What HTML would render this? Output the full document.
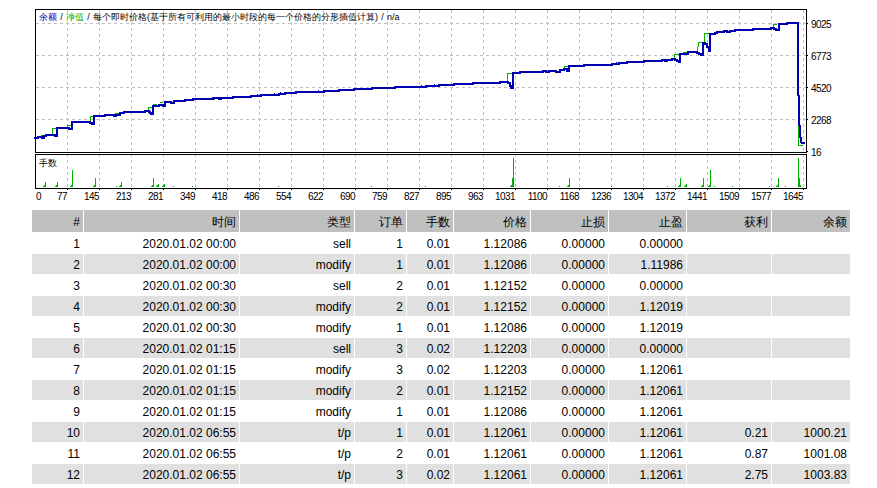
<!DOCTYPE html>
<html><head><meta charset="utf-8"><style>
html,body{margin:0;padding:0;background:#fff;width:877px;height:488px;overflow:hidden;position:relative}
body{font-family:"Liberation Sans",sans-serif}
.t{position:absolute;white-space:nowrap;color:#000}
.ttl{position:absolute;left:39px;top:11px;font-size:9px;line-height:12px;white-space:nowrap}
.yl{position:absolute;left:811px;font-size:10px;letter-spacing:-0.55px;line-height:10px;white-space:nowrap}
.xl{position:absolute;top:192px;font-size:10px;letter-spacing:-0.55px;line-height:10px;white-space:nowrap;text-align:right}
.sl{display:inline-block;width:9px;text-align:center}
.c{position:absolute;height:20px;line-height:22px;font-size:12px;text-align:right;box-sizing:border-box;padding-right:3px;white-space:nowrap;color:#000}
.h{background:#c0c0c0;line-height:24px}
.r2{background:#e0e0e0}
</style></head><body>
<svg width="877" height="205" style="position:absolute;left:0;top:0" shape-rendering="crispEdges">
<defs><pattern id="hd" patternUnits="userSpaceOnUse" x="0" y="0" width="6" height="1"><rect x="0" y="0" width="3" height="1" fill="#c0c0c0"/></pattern><pattern id="vd" patternUnits="userSpaceOnUse" x="0" y="4" width="1" height="6"><rect x="0" y="0" width="1" height="3" fill="#c0c0c0"/></pattern></defs>
<rect x="36" y="23" width="770" height="1" fill="url(#hd)"/>
<rect x="36" y="55" width="770" height="1" fill="url(#hd)"/>
<rect x="36" y="87" width="770" height="1" fill="url(#hd)"/>
<rect x="36" y="119" width="770" height="1" fill="url(#hd)"/>
<rect x="67" y="10" width="1" height="142" fill="url(#vd)"/>
<rect x="67" y="155" width="1" height="33" fill="url(#vd)"/>
<rect x="67" y="189" width="1" height="1" fill="#000"/>
<rect x="99" y="10" width="1" height="142" fill="url(#vd)"/>
<rect x="99" y="155" width="1" height="33" fill="url(#vd)"/>
<rect x="99" y="189" width="1" height="1" fill="#000"/>
<rect x="131" y="10" width="1" height="142" fill="url(#vd)"/>
<rect x="131" y="155" width="1" height="33" fill="url(#vd)"/>
<rect x="131" y="189" width="1" height="1" fill="#000"/>
<rect x="163" y="10" width="1" height="142" fill="url(#vd)"/>
<rect x="163" y="155" width="1" height="33" fill="url(#vd)"/>
<rect x="163" y="189" width="1" height="1" fill="#000"/>
<rect x="195" y="10" width="1" height="142" fill="url(#vd)"/>
<rect x="195" y="155" width="1" height="33" fill="url(#vd)"/>
<rect x="195" y="189" width="1" height="1" fill="#000"/>
<rect x="227" y="10" width="1" height="142" fill="url(#vd)"/>
<rect x="227" y="155" width="1" height="33" fill="url(#vd)"/>
<rect x="227" y="189" width="1" height="1" fill="#000"/>
<rect x="259" y="10" width="1" height="142" fill="url(#vd)"/>
<rect x="259" y="155" width="1" height="33" fill="url(#vd)"/>
<rect x="259" y="189" width="1" height="1" fill="#000"/>
<rect x="291" y="10" width="1" height="142" fill="url(#vd)"/>
<rect x="291" y="155" width="1" height="33" fill="url(#vd)"/>
<rect x="291" y="189" width="1" height="1" fill="#000"/>
<rect x="323" y="10" width="1" height="142" fill="url(#vd)"/>
<rect x="323" y="155" width="1" height="33" fill="url(#vd)"/>
<rect x="323" y="189" width="1" height="1" fill="#000"/>
<rect x="355" y="10" width="1" height="142" fill="url(#vd)"/>
<rect x="355" y="155" width="1" height="33" fill="url(#vd)"/>
<rect x="355" y="189" width="1" height="1" fill="#000"/>
<rect x="387" y="10" width="1" height="142" fill="url(#vd)"/>
<rect x="387" y="155" width="1" height="33" fill="url(#vd)"/>
<rect x="387" y="189" width="1" height="1" fill="#000"/>
<rect x="419" y="10" width="1" height="142" fill="url(#vd)"/>
<rect x="419" y="155" width="1" height="33" fill="url(#vd)"/>
<rect x="419" y="189" width="1" height="1" fill="#000"/>
<rect x="451" y="10" width="1" height="142" fill="url(#vd)"/>
<rect x="451" y="155" width="1" height="33" fill="url(#vd)"/>
<rect x="451" y="189" width="1" height="1" fill="#000"/>
<rect x="483" y="10" width="1" height="142" fill="url(#vd)"/>
<rect x="483" y="155" width="1" height="33" fill="url(#vd)"/>
<rect x="483" y="189" width="1" height="1" fill="#000"/>
<rect x="515" y="10" width="1" height="142" fill="url(#vd)"/>
<rect x="515" y="155" width="1" height="33" fill="url(#vd)"/>
<rect x="515" y="189" width="1" height="1" fill="#000"/>
<rect x="547" y="10" width="1" height="142" fill="url(#vd)"/>
<rect x="547" y="155" width="1" height="33" fill="url(#vd)"/>
<rect x="547" y="189" width="1" height="1" fill="#000"/>
<rect x="579" y="10" width="1" height="142" fill="url(#vd)"/>
<rect x="579" y="155" width="1" height="33" fill="url(#vd)"/>
<rect x="579" y="189" width="1" height="1" fill="#000"/>
<rect x="611" y="10" width="1" height="142" fill="url(#vd)"/>
<rect x="611" y="155" width="1" height="33" fill="url(#vd)"/>
<rect x="611" y="189" width="1" height="1" fill="#000"/>
<rect x="643" y="10" width="1" height="142" fill="url(#vd)"/>
<rect x="643" y="155" width="1" height="33" fill="url(#vd)"/>
<rect x="643" y="189" width="1" height="1" fill="#000"/>
<rect x="675" y="10" width="1" height="142" fill="url(#vd)"/>
<rect x="675" y="155" width="1" height="33" fill="url(#vd)"/>
<rect x="675" y="189" width="1" height="1" fill="#000"/>
<rect x="707" y="10" width="1" height="142" fill="url(#vd)"/>
<rect x="707" y="155" width="1" height="33" fill="url(#vd)"/>
<rect x="707" y="189" width="1" height="1" fill="#000"/>
<rect x="739" y="10" width="1" height="142" fill="url(#vd)"/>
<rect x="739" y="155" width="1" height="33" fill="url(#vd)"/>
<rect x="739" y="189" width="1" height="1" fill="#000"/>
<rect x="771" y="10" width="1" height="142" fill="url(#vd)"/>
<rect x="771" y="155" width="1" height="33" fill="url(#vd)"/>
<rect x="771" y="189" width="1" height="1" fill="#000"/>
<rect x="803" y="10" width="1" height="142" fill="url(#vd)"/>
<rect x="803" y="155" width="1" height="33" fill="url(#vd)"/>
<rect x="803" y="189" width="1" height="1" fill="#000"/>
<rect x="35.5" y="9.5" width="771" height="143" fill="none" stroke="#000" stroke-width="1"/>
<rect x="35.5" y="154.5" width="771" height="34" fill="none" stroke="#000" stroke-width="1"/>
<rect x="807" y="23" width="1" height="1" fill="#000"/>
<rect x="807" y="55" width="1" height="1" fill="#000"/>
<rect x="807" y="87" width="1" height="1" fill="#000"/>
<rect x="807" y="119" width="1" height="1" fill="#000"/>
<rect x="807" y="151" width="1" height="1" fill="#000"/>
<rect x="41" y="135" width="3" height="1" fill="#00b000"/>
<rect x="52" y="128" width="1" height="8" fill="#00b000"/>
<rect x="52" y="128" width="4" height="1" fill="#00b000"/>
<rect x="67" y="125" width="1" height="3" fill="#00b000"/>
<rect x="67" y="125" width="4" height="1" fill="#00b000"/>
<rect x="71" y="122" width="1" height="4" fill="#00b000"/>
<rect x="90" y="116" width="1" height="7" fill="#00b000"/>
<rect x="90" y="116" width="4" height="1" fill="#00b000"/>
<rect x="115" y="113" width="4" height="1" fill="#00b000"/>
<rect x="148" y="107" width="1" height="5" fill="#00b000"/>
<rect x="148" y="107" width="4" height="1" fill="#00b000"/>
<rect x="153" y="104" width="4" height="1" fill="#00b000"/>
<rect x="160" y="102" width="3" height="1" fill="#00b000"/>
<rect x="214" y="99" width="1" height="1" fill="#00b000"/>
<rect x="507" y="73" width="1" height="10" fill="#00b000"/>
<rect x="507" y="73" width="6" height="1" fill="#00b000"/>
<rect x="564" y="66" width="1" height="4" fill="#00b000"/>
<rect x="564" y="66" width="5" height="1" fill="#00b000"/>
<rect x="675" y="54" width="5" height="1" fill="#00b000"/>
<rect x="674" y="54" width="1" height="4" fill="#00b000"/>
<rect x="683" y="52" width="4" height="1" fill="#00b000"/>
<rect x="697" y="47" width="1" height="6" fill="#00b000"/>
<rect x="698" y="42" width="1" height="5" fill="#00b000"/>
<rect x="698" y="42" width="5" height="1" fill="#00b000"/>
<rect x="704" y="33" width="1" height="10" fill="#00b000"/>
<rect x="704" y="33" width="6" height="1" fill="#00b000"/>
<rect x="773" y="24" width="4" height="1" fill="#00b000"/>
<rect x="773" y="24" width="1" height="4" fill="#00b000"/>
<rect x="798" y="125" width="1" height="21" fill="#00b000"/>
<rect x="798" y="145" width="5" height="1" fill="#00b000"/>
<rect x="34" y="137" width="5" height="2" fill="#0000b0"/>
<rect x="37" y="136" width="2" height="3" fill="#0000b0"/>
<rect x="37" y="136" width="6" height="2" fill="#0000b0"/>
<rect x="41" y="136" width="2" height="3" fill="#0000b0"/>
<rect x="41" y="137" width="4" height="2" fill="#0000b0"/>
<rect x="43" y="135" width="2" height="4" fill="#0000b0"/>
<rect x="43" y="135" width="4" height="2" fill="#0000b0"/>
<rect x="45" y="134" width="2" height="3" fill="#0000b0"/>
<rect x="45" y="134" width="11" height="2" fill="#0000b0"/>
<rect x="54" y="134" width="2" height="3" fill="#0000b0"/>
<rect x="54" y="135" width="4" height="2" fill="#0000b0"/>
<rect x="56" y="127" width="2" height="10" fill="#0000b0"/>
<rect x="56" y="127" width="14" height="2" fill="#0000b0"/>
<rect x="68" y="127" width="2" height="3" fill="#0000b0"/>
<rect x="68" y="128" width="5" height="2" fill="#0000b0"/>
<rect x="71" y="121" width="2" height="9" fill="#0000b0"/>
<rect x="71" y="121" width="20" height="2" fill="#0000b0"/>
<rect x="89" y="121" width="2" height="3" fill="#0000b0"/>
<rect x="89" y="122" width="4" height="2" fill="#0000b0"/>
<rect x="91" y="122" width="2" height="3" fill="#0000b0"/>
<rect x="91" y="123" width="4" height="2" fill="#0000b0"/>
<rect x="93" y="115" width="2" height="10" fill="#0000b0"/>
<rect x="93" y="115" width="13" height="2" fill="#0000b0"/>
<rect x="104" y="114" width="2" height="3" fill="#0000b0"/>
<rect x="104" y="114" width="11" height="2" fill="#0000b0"/>
<rect x="113" y="114" width="2" height="3" fill="#0000b0"/>
<rect x="113" y="115" width="4" height="2" fill="#0000b0"/>
<rect x="115" y="114" width="2" height="3" fill="#0000b0"/>
<rect x="115" y="114" width="6" height="2" fill="#0000b0"/>
<rect x="119" y="112" width="2" height="4" fill="#0000b0"/>
<rect x="119" y="112" width="6" height="2" fill="#0000b0"/>
<rect x="123" y="111" width="2" height="3" fill="#0000b0"/>
<rect x="123" y="111" width="23" height="2" fill="#0000b0"/>
<rect x="144" y="110" width="2" height="3" fill="#0000b0"/>
<rect x="144" y="110" width="6" height="2" fill="#0000b0"/>
<rect x="148" y="110" width="2" height="3" fill="#0000b0"/>
<rect x="148" y="111" width="3" height="2" fill="#0000b0"/>
<rect x="149" y="111" width="2" height="3" fill="#0000b0"/>
<rect x="149" y="112" width="3" height="2" fill="#0000b0"/>
<rect x="150" y="112" width="2" height="3" fill="#0000b0"/>
<rect x="150" y="113" width="4" height="2" fill="#0000b0"/>
<rect x="152" y="105" width="2" height="10" fill="#0000b0"/>
<rect x="152" y="105" width="8" height="2" fill="#0000b0"/>
<rect x="158" y="104" width="2" height="3" fill="#0000b0"/>
<rect x="158" y="104" width="6" height="2" fill="#0000b0"/>
<rect x="162" y="104" width="2" height="3" fill="#0000b0"/>
<rect x="162" y="105" width="4" height="2" fill="#0000b0"/>
<rect x="164" y="101" width="2" height="6" fill="#0000b0"/>
<rect x="164" y="101" width="8" height="2" fill="#0000b0"/>
<rect x="170" y="101" width="2" height="3" fill="#0000b0"/>
<rect x="170" y="102" width="5" height="2" fill="#0000b0"/>
<rect x="173" y="100" width="2" height="4" fill="#0000b0"/>
<rect x="173" y="100" width="13" height="2" fill="#0000b0"/>
<rect x="184" y="99" width="2" height="3" fill="#0000b0"/>
<rect x="184" y="99" width="10" height="2" fill="#0000b0"/>
<rect x="192" y="98" width="2" height="3" fill="#0000b0"/>
<rect x="192" y="98" width="22" height="2" fill="#0000b0"/>
<rect x="212" y="97" width="2" height="3" fill="#0000b0"/>
<rect x="212" y="97" width="8" height="2" fill="#0000b0"/>
<rect x="218" y="97" width="2" height="3" fill="#0000b0"/>
<rect x="218" y="98" width="4" height="2" fill="#0000b0"/>
<rect x="220" y="97" width="2" height="3" fill="#0000b0"/>
<rect x="220" y="97" width="14" height="2" fill="#0000b0"/>
<rect x="232" y="96" width="2" height="3" fill="#0000b0"/>
<rect x="232" y="96" width="20" height="2" fill="#0000b0"/>
<rect x="250" y="95" width="2" height="3" fill="#0000b0"/>
<rect x="250" y="95" width="12" height="2" fill="#0000b0"/>
<rect x="260" y="94" width="2" height="3" fill="#0000b0"/>
<rect x="260" y="94" width="20" height="2" fill="#0000b0"/>
<rect x="278" y="93" width="2" height="3" fill="#0000b0"/>
<rect x="278" y="93" width="8" height="2" fill="#0000b0"/>
<rect x="284" y="92" width="2" height="3" fill="#0000b0"/>
<rect x="284" y="92" width="13" height="2" fill="#0000b0"/>
<rect x="295" y="91" width="2" height="3" fill="#0000b0"/>
<rect x="295" y="91" width="30" height="2" fill="#0000b0"/>
<rect x="323" y="90" width="2" height="3" fill="#0000b0"/>
<rect x="323" y="90" width="17" height="2" fill="#0000b0"/>
<rect x="338" y="89" width="2" height="3" fill="#0000b0"/>
<rect x="338" y="89" width="17" height="2" fill="#0000b0"/>
<rect x="353" y="88" width="2" height="3" fill="#0000b0"/>
<rect x="353" y="88" width="20" height="2" fill="#0000b0"/>
<rect x="371" y="87" width="2" height="3" fill="#0000b0"/>
<rect x="371" y="87" width="25" height="2" fill="#0000b0"/>
<rect x="394" y="86" width="2" height="3" fill="#0000b0"/>
<rect x="394" y="86" width="33" height="2" fill="#0000b0"/>
<rect x="425" y="85" width="2" height="3" fill="#0000b0"/>
<rect x="425" y="85" width="15" height="2" fill="#0000b0"/>
<rect x="438" y="84" width="2" height="3" fill="#0000b0"/>
<rect x="438" y="84" width="17" height="2" fill="#0000b0"/>
<rect x="453" y="83" width="2" height="3" fill="#0000b0"/>
<rect x="453" y="83" width="21" height="2" fill="#0000b0"/>
<rect x="472" y="82" width="2" height="3" fill="#0000b0"/>
<rect x="472" y="82" width="29" height="2" fill="#0000b0"/>
<rect x="499" y="81" width="2" height="3" fill="#0000b0"/>
<rect x="499" y="81" width="10" height="2" fill="#0000b0"/>
<rect x="507" y="81" width="2" height="3" fill="#0000b0"/>
<rect x="507" y="82" width="4" height="2" fill="#0000b0"/>
<rect x="509" y="82" width="2" height="5" fill="#0000b0"/>
<rect x="509" y="85" width="3" height="2" fill="#0000b0"/>
<rect x="510" y="85" width="2" height="4" fill="#0000b0"/>
<rect x="510" y="87" width="4" height="2" fill="#0000b0"/>
<rect x="512" y="72" width="2" height="17" fill="#0000b0"/>
<rect x="512" y="72" width="9" height="2" fill="#0000b0"/>
<rect x="519" y="71" width="2" height="3" fill="#0000b0"/>
<rect x="519" y="71" width="25" height="2" fill="#0000b0"/>
<rect x="542" y="70" width="2" height="3" fill="#0000b0"/>
<rect x="542" y="70" width="5" height="2" fill="#0000b0"/>
<rect x="545" y="70" width="2" height="3" fill="#0000b0"/>
<rect x="545" y="71" width="5" height="2" fill="#0000b0"/>
<rect x="548" y="70" width="2" height="3" fill="#0000b0"/>
<rect x="548" y="70" width="9" height="2" fill="#0000b0"/>
<rect x="555" y="70" width="2" height="3" fill="#0000b0"/>
<rect x="555" y="71" width="6" height="2" fill="#0000b0"/>
<rect x="559" y="69" width="2" height="4" fill="#0000b0"/>
<rect x="559" y="69" width="6" height="2" fill="#0000b0"/>
<rect x="563" y="68" width="2" height="3" fill="#0000b0"/>
<rect x="563" y="68" width="5" height="2" fill="#0000b0"/>
<rect x="566" y="68" width="2" height="4" fill="#0000b0"/>
<rect x="566" y="70" width="4" height="2" fill="#0000b0"/>
<rect x="568" y="65" width="2" height="7" fill="#0000b0"/>
<rect x="568" y="65" width="17" height="2" fill="#0000b0"/>
<rect x="583" y="64" width="2" height="3" fill="#0000b0"/>
<rect x="583" y="64" width="30" height="2" fill="#0000b0"/>
<rect x="611" y="63" width="2" height="3" fill="#0000b0"/>
<rect x="611" y="63" width="9" height="2" fill="#0000b0"/>
<rect x="618" y="62" width="2" height="3" fill="#0000b0"/>
<rect x="618" y="62" width="10" height="2" fill="#0000b0"/>
<rect x="626" y="61" width="2" height="3" fill="#0000b0"/>
<rect x="626" y="61" width="19" height="2" fill="#0000b0"/>
<rect x="643" y="60" width="2" height="3" fill="#0000b0"/>
<rect x="643" y="60" width="20" height="2" fill="#0000b0"/>
<rect x="661" y="59" width="2" height="3" fill="#0000b0"/>
<rect x="661" y="59" width="5" height="2" fill="#0000b0"/>
<rect x="664" y="59" width="2" height="3" fill="#0000b0"/>
<rect x="664" y="60" width="4" height="2" fill="#0000b0"/>
<rect x="666" y="59" width="2" height="3" fill="#0000b0"/>
<rect x="666" y="59" width="7" height="2" fill="#0000b0"/>
<rect x="671" y="58" width="2" height="3" fill="#0000b0"/>
<rect x="671" y="58" width="5" height="2" fill="#0000b0"/>
<rect x="674" y="58" width="2" height="3" fill="#0000b0"/>
<rect x="674" y="59" width="4" height="2" fill="#0000b0"/>
<rect x="676" y="59" width="2" height="3" fill="#0000b0"/>
<rect x="676" y="60" width="4" height="2" fill="#0000b0"/>
<rect x="678" y="60" width="2" height="3" fill="#0000b0"/>
<rect x="678" y="61" width="3" height="2" fill="#0000b0"/>
<rect x="679" y="53" width="2" height="10" fill="#0000b0"/>
<rect x="679" y="53" width="10" height="2" fill="#0000b0"/>
<rect x="687" y="51" width="2" height="4" fill="#0000b0"/>
<rect x="687" y="51" width="11" height="2" fill="#0000b0"/>
<rect x="696" y="51" width="2" height="3" fill="#0000b0"/>
<rect x="696" y="52" width="4" height="2" fill="#0000b0"/>
<rect x="698" y="52" width="2" height="3" fill="#0000b0"/>
<rect x="698" y="53" width="4" height="2" fill="#0000b0"/>
<rect x="700" y="53" width="2" height="3" fill="#0000b0"/>
<rect x="700" y="54" width="4" height="2" fill="#0000b0"/>
<rect x="702" y="42" width="2" height="14" fill="#0000b0"/>
<rect x="702" y="42" width="4" height="2" fill="#0000b0"/>
<rect x="704" y="42" width="2" height="3" fill="#0000b0"/>
<rect x="704" y="43" width="4" height="2" fill="#0000b0"/>
<rect x="706" y="43" width="2" height="5" fill="#0000b0"/>
<rect x="706" y="46" width="4" height="2" fill="#0000b0"/>
<rect x="708" y="46" width="2" height="6" fill="#0000b0"/>
<rect x="708" y="50" width="3" height="2" fill="#0000b0"/>
<rect x="709" y="33" width="2" height="19" fill="#0000b0"/>
<rect x="709" y="33" width="7" height="2" fill="#0000b0"/>
<rect x="714" y="32" width="2" height="3" fill="#0000b0"/>
<rect x="714" y="32" width="4" height="2" fill="#0000b0"/>
<rect x="716" y="31" width="2" height="3" fill="#0000b0"/>
<rect x="716" y="31" width="9" height="2" fill="#0000b0"/>
<rect x="723" y="30" width="2" height="3" fill="#0000b0"/>
<rect x="723" y="30" width="5" height="2" fill="#0000b0"/>
<rect x="726" y="30" width="2" height="3" fill="#0000b0"/>
<rect x="726" y="31" width="5" height="2" fill="#0000b0"/>
<rect x="729" y="30" width="2" height="3" fill="#0000b0"/>
<rect x="729" y="30" width="7" height="2" fill="#0000b0"/>
<rect x="734" y="29" width="2" height="3" fill="#0000b0"/>
<rect x="734" y="29" width="20" height="2" fill="#0000b0"/>
<rect x="752" y="28" width="2" height="3" fill="#0000b0"/>
<rect x="752" y="28" width="20" height="2" fill="#0000b0"/>
<rect x="770" y="27" width="2" height="3" fill="#0000b0"/>
<rect x="770" y="27" width="5" height="2" fill="#0000b0"/>
<rect x="773" y="27" width="2" height="3" fill="#0000b0"/>
<rect x="773" y="28" width="4" height="2" fill="#0000b0"/>
<rect x="775" y="28" width="2" height="3" fill="#0000b0"/>
<rect x="775" y="29" width="5" height="2" fill="#0000b0"/>
<rect x="778" y="23" width="2" height="8" fill="#0000b0"/>
<rect x="778" y="23" width="10" height="2" fill="#0000b0"/>
<rect x="786" y="22" width="2" height="3" fill="#0000b0"/>
<rect x="786" y="22" width="12" height="2" fill="#0000b0"/>
<rect x="257" y="94" width="1" height="1" fill="#0000b0"/>
<rect x="274" y="93" width="1" height="1" fill="#0000b0"/>
<rect x="280" y="92" width="1" height="1" fill="#0000b0"/>
<rect x="318" y="90" width="1" height="1" fill="#0000b0"/>
<rect x="421" y="85" width="1" height="1" fill="#0000b0"/>
<rect x="434" y="84" width="1" height="1" fill="#0000b0"/>
<rect x="616" y="62" width="1" height="1" fill="#0000b0"/>
<rect x="797" y="22" width="2" height="74" fill="#0000b0"/>
<rect x="798" y="95" width="2" height="31" fill="#0000b0"/>
<rect x="799" y="125" width="2" height="13" fill="#0000b0"/>
<rect x="800" y="137" width="2" height="6" fill="#0000b0"/>
<rect x="801" y="142" width="4" height="2" fill="#0000b0"/>
<rect x="45" y="182" width="1" height="5" fill="#00b000"/>
<rect x="43" y="186" width="2" height="1" fill="#00b000"/><rect x="44" y="185" width="1" height="1" fill="#00b000"/>
<rect x="57" y="182" width="1" height="5" fill="#00b000"/>
<rect x="55" y="186" width="2" height="1" fill="#00b000"/><rect x="56" y="185" width="1" height="1" fill="#00b000"/>
<rect x="72" y="170" width="1" height="17" fill="#00b000"/>
<rect x="70" y="186" width="2" height="1" fill="#00b000"/><rect x="71" y="185" width="1" height="1" fill="#00b000"/>
<rect x="95" y="178" width="1" height="9" fill="#00b000"/>
<rect x="93" y="186" width="2" height="1" fill="#00b000"/><rect x="94" y="185" width="1" height="1" fill="#00b000"/>
<rect x="116" y="186" width="1" height="1" fill="#00b000"/>
<rect x="121" y="182" width="1" height="5" fill="#00b000"/>
<rect x="119" y="186" width="2" height="1" fill="#00b000"/><rect x="120" y="185" width="1" height="1" fill="#00b000"/>
<rect x="153" y="178" width="1" height="9" fill="#00b000"/>
<rect x="151" y="186" width="2" height="1" fill="#00b000"/><rect x="152" y="185" width="1" height="1" fill="#00b000"/>
<rect x="158" y="184" width="1" height="3" fill="#00b000"/>
<rect x="156" y="186" width="2" height="1" fill="#00b000"/><rect x="157" y="185" width="1" height="1" fill="#00b000"/>
<rect x="164" y="184" width="1" height="3" fill="#00b000"/>
<rect x="162" y="186" width="2" height="1" fill="#00b000"/><rect x="163" y="185" width="1" height="1" fill="#00b000"/>
<rect x="173" y="186" width="1" height="1" fill="#00b000"/>
<rect x="192" y="186" width="1" height="1" fill="#00b000"/>
<rect x="278" y="186" width="1" height="1" fill="#00b000"/>
<rect x="371" y="186" width="1" height="1" fill="#00b000"/>
<rect x="425" y="186" width="1" height="1" fill="#00b000"/>
<rect x="512" y="178" width="1" height="9" fill="#00b000"/>
<rect x="510" y="186" width="2" height="1" fill="#00b000"/><rect x="511" y="185" width="1" height="1" fill="#00b000"/>
<rect x="513" y="158" width="1" height="29" fill="#00b000"/>
<rect x="511" y="186" width="2" height="1" fill="#00b000"/><rect x="512" y="185" width="1" height="1" fill="#00b000"/>
<rect x="559" y="186" width="1" height="1" fill="#00b000"/>
<rect x="569" y="178" width="1" height="9" fill="#00b000"/>
<rect x="567" y="186" width="2" height="1" fill="#00b000"/><rect x="568" y="185" width="1" height="1" fill="#00b000"/>
<rect x="611" y="186" width="1" height="1" fill="#00b000"/>
<rect x="667" y="186" width="1" height="1" fill="#00b000"/>
<rect x="680" y="178" width="1" height="9" fill="#00b000"/>
<rect x="678" y="186" width="2" height="1" fill="#00b000"/><rect x="679" y="185" width="1" height="1" fill="#00b000"/>
<rect x="686" y="184" width="1" height="3" fill="#00b000"/>
<rect x="684" y="186" width="2" height="1" fill="#00b000"/><rect x="685" y="185" width="1" height="1" fill="#00b000"/>
<rect x="703" y="178" width="1" height="9" fill="#00b000"/>
<rect x="701" y="186" width="2" height="1" fill="#00b000"/><rect x="702" y="185" width="1" height="1" fill="#00b000"/>
<rect x="710" y="170" width="1" height="17" fill="#00b000"/>
<rect x="708" y="186" width="2" height="1" fill="#00b000"/><rect x="709" y="185" width="1" height="1" fill="#00b000"/>
<rect x="714" y="186" width="1" height="1" fill="#00b000"/>
<rect x="732" y="186" width="1" height="1" fill="#00b000"/>
<rect x="769" y="186" width="1" height="1" fill="#00b000"/>
<rect x="778" y="178" width="1" height="9" fill="#00b000"/>
<rect x="776" y="186" width="2" height="1" fill="#00b000"/><rect x="777" y="185" width="1" height="1" fill="#00b000"/>
<rect x="785" y="186" width="1" height="1" fill="#00b000"/>
<rect x="798" y="158" width="1" height="29" fill="#00b000"/>
<rect x="799" y="178" width="1" height="9" fill="#00b000"/>
<rect x="800" y="185" width="1" height="2" fill="#00b000"/>
</svg>
<div class="ttl"><span style="color:#0000b0">余额</span><span class="sl">/</span><span style="color:#00b000">净值</span><span class="sl">/</span>每个即时价格(基于所有可利用的最小时段的每一个价格的分形插值计算)<span class="sl">/</span>n/a</div>
<div style="position:absolute;left:39px;top:157px;font-size:9px;line-height:12px">手数</div>
<div class="yl" style="top:20px">9025</div>
<div class="yl" style="top:52px">6773</div>
<div class="yl" style="top:84px">4520</div>
<div class="yl" style="top:116px">2268</div>
<div class="yl" style="top:148px">16</div>
<div class="xl" style="left:36px">0</div>
<div class="xl" style="left:7px;width:60px">77</div>
<div class="xl" style="left:39px;width:60px">145</div>
<div class="xl" style="left:71px;width:60px">213</div>
<div class="xl" style="left:103px;width:60px">281</div>
<div class="xl" style="left:135px;width:60px">349</div>
<div class="xl" style="left:167px;width:60px">418</div>
<div class="xl" style="left:199px;width:60px">486</div>
<div class="xl" style="left:231px;width:60px">554</div>
<div class="xl" style="left:263px;width:60px">622</div>
<div class="xl" style="left:295px;width:60px">690</div>
<div class="xl" style="left:327px;width:60px">759</div>
<div class="xl" style="left:359px;width:60px">827</div>
<div class="xl" style="left:391px;width:60px">895</div>
<div class="xl" style="left:423px;width:60px">963</div>
<div class="xl" style="left:455px;width:60px">1031</div>
<div class="xl" style="left:487px;width:60px">1100</div>
<div class="xl" style="left:519px;width:60px">1168</div>
<div class="xl" style="left:551px;width:60px">1236</div>
<div class="xl" style="left:583px;width:60px">1304</div>
<div class="xl" style="left:615px;width:60px">1372</div>
<div class="xl" style="left:647px;width:60px">1441</div>
<div class="xl" style="left:679px;width:60px">1509</div>
<div class="xl" style="left:711px;width:60px">1577</div>
<div class="xl" style="left:743px;width:60px">1645</div>
<div class="c h" style="left:32px;top:210px;width:51px;height:22px">#</div>
<div class="c h" style="left:84px;top:210px;width:155px;height:22px">时间</div>
<div class="c h" style="left:240px;top:210px;width:114px;height:22px">类型</div>
<div class="c h" style="left:355px;top:210px;width:51px;height:22px">订单</div>
<div class="c h" style="left:407px;top:210px;width:46px;height:22px">手数</div>
<div class="c h" style="left:454px;top:210px;width:76px;height:22px">价格</div>
<div class="c h" style="left:531px;top:210px;width:77px;height:22px">止损</div>
<div class="c h" style="left:609px;top:210px;width:77px;height:22px">止盈</div>
<div class="c h" style="left:687px;top:210px;width:84px;height:22px">获利</div>
<div class="c h" style="left:772px;top:210px;width:78px;height:22px">余额</div>
<div class="c" style="left:32px;top:233px;width:51px">1</div>
<div class="c" style="left:84px;top:233px;width:155px">2020.01.02 00:00</div>
<div class="c" style="left:240px;top:233px;width:114px">sell</div>
<div class="c" style="left:355px;top:233px;width:51px">1</div>
<div class="c" style="left:407px;top:233px;width:46px">0.01</div>
<div class="c" style="left:454px;top:233px;width:76px">1.12086</div>
<div class="c" style="left:531px;top:233px;width:77px">0.00000</div>
<div class="c" style="left:609px;top:233px;width:77px">0.00000</div>
<div class="c" style="left:687px;top:233px;width:84px"></div>
<div class="c" style="left:772px;top:233px;width:78px"></div>
<div class="c r2" style="left:32px;top:254px;width:51px">2</div>
<div class="c r2" style="left:84px;top:254px;width:155px">2020.01.02 00:00</div>
<div class="c r2" style="left:240px;top:254px;width:114px">modify</div>
<div class="c r2" style="left:355px;top:254px;width:51px">1</div>
<div class="c r2" style="left:407px;top:254px;width:46px">0.01</div>
<div class="c r2" style="left:454px;top:254px;width:76px">1.12086</div>
<div class="c r2" style="left:531px;top:254px;width:77px">0.00000</div>
<div class="c r2" style="left:609px;top:254px;width:77px">1.11986</div>
<div class="c r2" style="left:687px;top:254px;width:84px"></div>
<div class="c r2" style="left:772px;top:254px;width:78px"></div>
<div class="c" style="left:32px;top:275px;width:51px">3</div>
<div class="c" style="left:84px;top:275px;width:155px">2020.01.02 00:30</div>
<div class="c" style="left:240px;top:275px;width:114px">sell</div>
<div class="c" style="left:355px;top:275px;width:51px">2</div>
<div class="c" style="left:407px;top:275px;width:46px">0.01</div>
<div class="c" style="left:454px;top:275px;width:76px">1.12152</div>
<div class="c" style="left:531px;top:275px;width:77px">0.00000</div>
<div class="c" style="left:609px;top:275px;width:77px">0.00000</div>
<div class="c" style="left:687px;top:275px;width:84px"></div>
<div class="c" style="left:772px;top:275px;width:78px"></div>
<div class="c r2" style="left:32px;top:296px;width:51px">4</div>
<div class="c r2" style="left:84px;top:296px;width:155px">2020.01.02 00:30</div>
<div class="c r2" style="left:240px;top:296px;width:114px">modify</div>
<div class="c r2" style="left:355px;top:296px;width:51px">2</div>
<div class="c r2" style="left:407px;top:296px;width:46px">0.01</div>
<div class="c r2" style="left:454px;top:296px;width:76px">1.12152</div>
<div class="c r2" style="left:531px;top:296px;width:77px">0.00000</div>
<div class="c r2" style="left:609px;top:296px;width:77px">1.12019</div>
<div class="c r2" style="left:687px;top:296px;width:84px"></div>
<div class="c r2" style="left:772px;top:296px;width:78px"></div>
<div class="c" style="left:32px;top:317px;width:51px">5</div>
<div class="c" style="left:84px;top:317px;width:155px">2020.01.02 00:30</div>
<div class="c" style="left:240px;top:317px;width:114px">modify</div>
<div class="c" style="left:355px;top:317px;width:51px">1</div>
<div class="c" style="left:407px;top:317px;width:46px">0.01</div>
<div class="c" style="left:454px;top:317px;width:76px">1.12086</div>
<div class="c" style="left:531px;top:317px;width:77px">0.00000</div>
<div class="c" style="left:609px;top:317px;width:77px">1.12019</div>
<div class="c" style="left:687px;top:317px;width:84px"></div>
<div class="c" style="left:772px;top:317px;width:78px"></div>
<div class="c r2" style="left:32px;top:338px;width:51px">6</div>
<div class="c r2" style="left:84px;top:338px;width:155px">2020.01.02 01:15</div>
<div class="c r2" style="left:240px;top:338px;width:114px">sell</div>
<div class="c r2" style="left:355px;top:338px;width:51px">3</div>
<div class="c r2" style="left:407px;top:338px;width:46px">0.02</div>
<div class="c r2" style="left:454px;top:338px;width:76px">1.12203</div>
<div class="c r2" style="left:531px;top:338px;width:77px">0.00000</div>
<div class="c r2" style="left:609px;top:338px;width:77px">0.00000</div>
<div class="c r2" style="left:687px;top:338px;width:84px"></div>
<div class="c r2" style="left:772px;top:338px;width:78px"></div>
<div class="c" style="left:32px;top:359px;width:51px">7</div>
<div class="c" style="left:84px;top:359px;width:155px">2020.01.02 01:15</div>
<div class="c" style="left:240px;top:359px;width:114px">modify</div>
<div class="c" style="left:355px;top:359px;width:51px">3</div>
<div class="c" style="left:407px;top:359px;width:46px">0.02</div>
<div class="c" style="left:454px;top:359px;width:76px">1.12203</div>
<div class="c" style="left:531px;top:359px;width:77px">0.00000</div>
<div class="c" style="left:609px;top:359px;width:77px">1.12061</div>
<div class="c" style="left:687px;top:359px;width:84px"></div>
<div class="c" style="left:772px;top:359px;width:78px"></div>
<div class="c r2" style="left:32px;top:380px;width:51px">8</div>
<div class="c r2" style="left:84px;top:380px;width:155px">2020.01.02 01:15</div>
<div class="c r2" style="left:240px;top:380px;width:114px">modify</div>
<div class="c r2" style="left:355px;top:380px;width:51px">2</div>
<div class="c r2" style="left:407px;top:380px;width:46px">0.01</div>
<div class="c r2" style="left:454px;top:380px;width:76px">1.12152</div>
<div class="c r2" style="left:531px;top:380px;width:77px">0.00000</div>
<div class="c r2" style="left:609px;top:380px;width:77px">1.12061</div>
<div class="c r2" style="left:687px;top:380px;width:84px"></div>
<div class="c r2" style="left:772px;top:380px;width:78px"></div>
<div class="c" style="left:32px;top:401px;width:51px">9</div>
<div class="c" style="left:84px;top:401px;width:155px">2020.01.02 01:15</div>
<div class="c" style="left:240px;top:401px;width:114px">modify</div>
<div class="c" style="left:355px;top:401px;width:51px">1</div>
<div class="c" style="left:407px;top:401px;width:46px">0.01</div>
<div class="c" style="left:454px;top:401px;width:76px">1.12086</div>
<div class="c" style="left:531px;top:401px;width:77px">0.00000</div>
<div class="c" style="left:609px;top:401px;width:77px">1.12061</div>
<div class="c" style="left:687px;top:401px;width:84px"></div>
<div class="c" style="left:772px;top:401px;width:78px"></div>
<div class="c r2" style="left:32px;top:422px;width:51px">10</div>
<div class="c r2" style="left:84px;top:422px;width:155px">2020.01.02 06:55</div>
<div class="c r2" style="left:240px;top:422px;width:114px">t/p</div>
<div class="c r2" style="left:355px;top:422px;width:51px">1</div>
<div class="c r2" style="left:407px;top:422px;width:46px">0.01</div>
<div class="c r2" style="left:454px;top:422px;width:76px">1.12061</div>
<div class="c r2" style="left:531px;top:422px;width:77px">0.00000</div>
<div class="c r2" style="left:609px;top:422px;width:77px">1.12061</div>
<div class="c r2" style="left:687px;top:422px;width:84px">0.21</div>
<div class="c r2" style="left:772px;top:422px;width:78px">1000.21</div>
<div class="c" style="left:32px;top:443px;width:51px">11</div>
<div class="c" style="left:84px;top:443px;width:155px">2020.01.02 06:55</div>
<div class="c" style="left:240px;top:443px;width:114px">t/p</div>
<div class="c" style="left:355px;top:443px;width:51px">2</div>
<div class="c" style="left:407px;top:443px;width:46px">0.01</div>
<div class="c" style="left:454px;top:443px;width:76px">1.12061</div>
<div class="c" style="left:531px;top:443px;width:77px">0.00000</div>
<div class="c" style="left:609px;top:443px;width:77px">1.12061</div>
<div class="c" style="left:687px;top:443px;width:84px">0.87</div>
<div class="c" style="left:772px;top:443px;width:78px">1001.08</div>
<div class="c r2" style="left:32px;top:464px;width:51px">12</div>
<div class="c r2" style="left:84px;top:464px;width:155px">2020.01.02 06:55</div>
<div class="c r2" style="left:240px;top:464px;width:114px">t/p</div>
<div class="c r2" style="left:355px;top:464px;width:51px">3</div>
<div class="c r2" style="left:407px;top:464px;width:46px">0.02</div>
<div class="c r2" style="left:454px;top:464px;width:76px">1.12061</div>
<div class="c r2" style="left:531px;top:464px;width:77px">0.00000</div>
<div class="c r2" style="left:609px;top:464px;width:77px">1.12061</div>
<div class="c r2" style="left:687px;top:464px;width:84px">2.75</div>
<div class="c r2" style="left:772px;top:464px;width:78px">1003.83</div>
</body></html>
